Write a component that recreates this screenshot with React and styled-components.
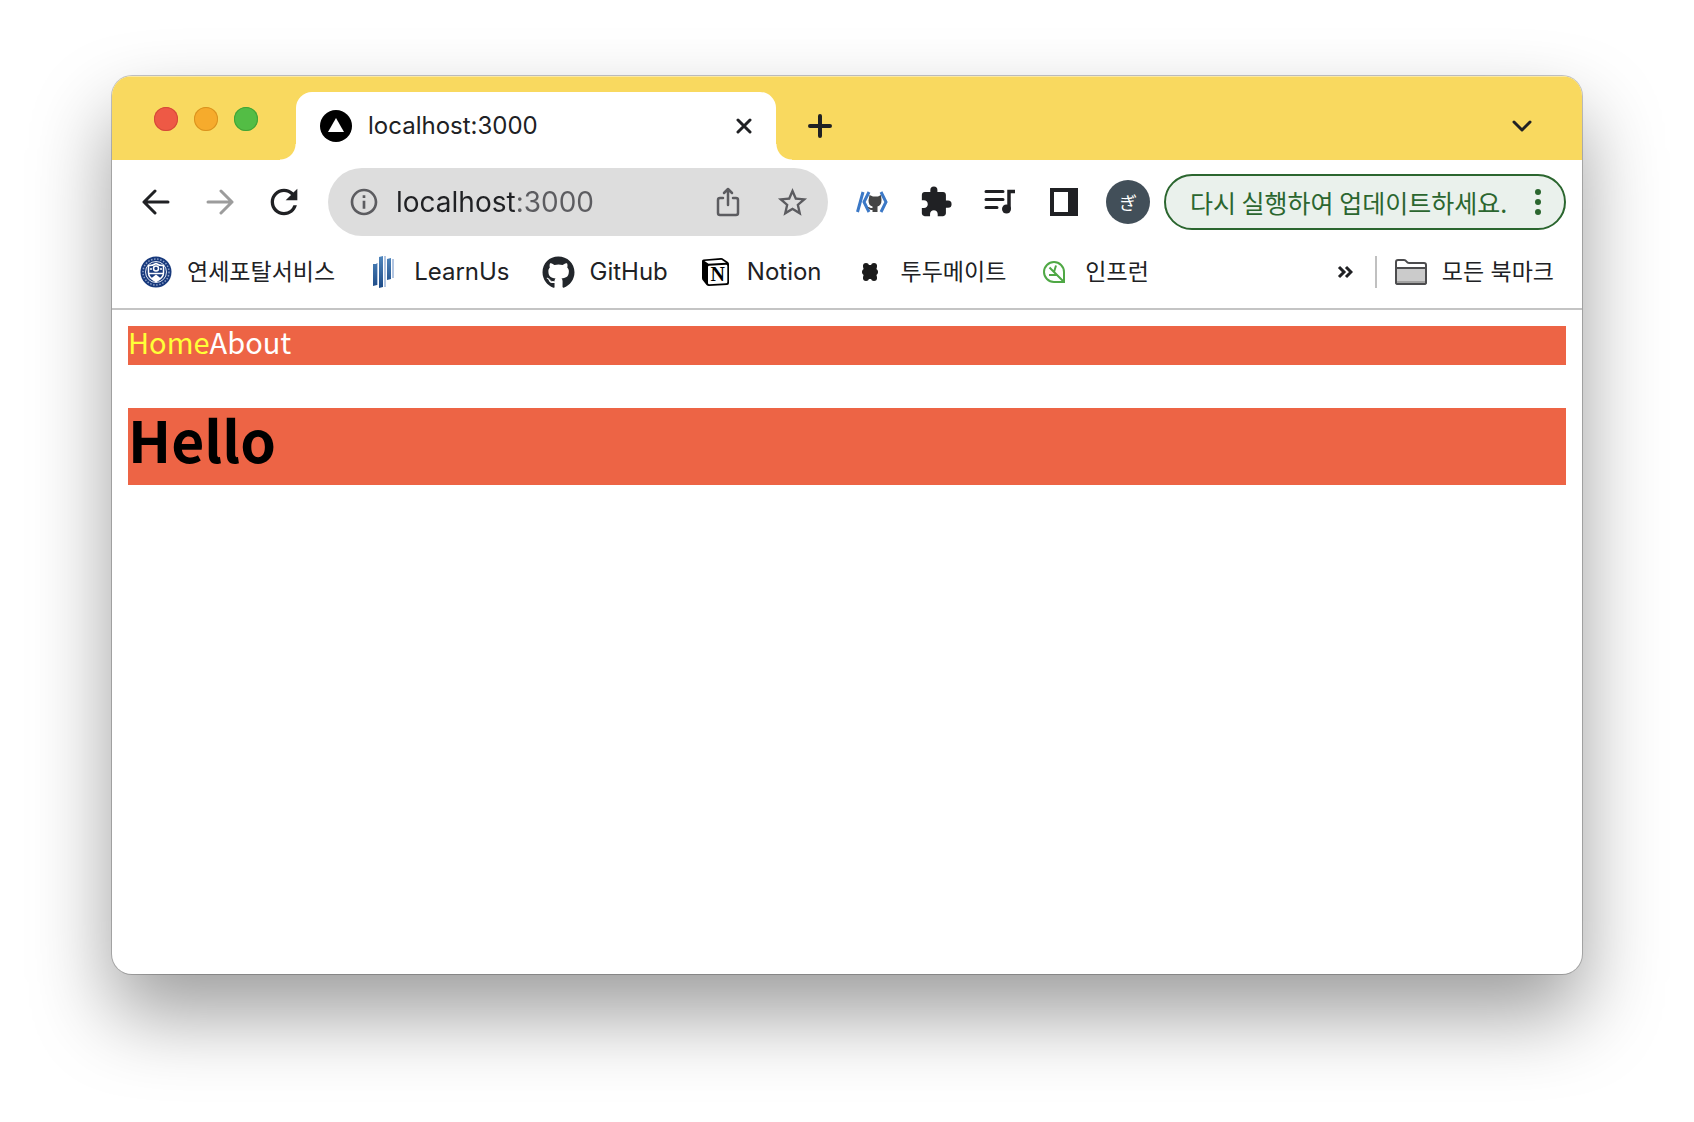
import React from "react";
import styled, { createGlobalStyle } from "styled-components";
import { MdExtension, MdRefresh, MdStarBorder, MdInfoOutline } from "react-icons/md";
import { FaGithub } from "react-icons/fa";

const uiFont = 'Inter, "Noto Sans CJK KR", sans-serif';
const ink = "#202124";
const muted = "#5c5c60";

const GlobalStyle = createGlobalStyle`
  *, *::before, *::after { box-sizing: border-box; }
  body { margin: 0; background: #fff; }
  button { border: 0; padding: 0; background: none; color: inherit; font: inherit; cursor: pointer; }
  a { text-decoration: none; }
  svg { display: block; flex: none; }
`;

const Desktop = styled.main`
  display: flex;
  min-height: 100vh;
  padding: 76px 112px 148px;
`;

const Window = styled.section`
  flex: 1;
  min-width: 0;
  display: flex;
  flex-direction: column;
  overflow: hidden;
  border-radius: 20px;
  background: #fff;
  color: ${ink};
  font-family: ${uiFont};
  box-shadow: 0 0 0 1px rgba(0, 0, 0, 0.22), 0 40px 80px rgba(0, 0, 0, 0.39);
`;

const TabStrip = styled.header`
  display: flex;
  align-items: flex-end;
  height: 84px;
  padding: 2px 24px 0 42px;
  background: #f9d95f;
  box-shadow: inset 0 2px 0 -1px #fbe9a5;
`;

const TrafficLights = styled.div`
  display: flex;
  align-self: center;
  gap: 16px;
  width: 142px;
`;

const Light = styled.button`
  width: 24px;
  height: 24px;
  border-radius: 50%;
  background: ${(p) => p.$fill};
  box-shadow: inset 0 0 0 1px ${(p) => p.$edge};
`;

const Tab = styled.div`
  position: relative;
  display: flex;
  align-items: center;
  gap: 16px;
  width: 480px;
  height: 68px;
  padding: 0 16px 0 24px;
  border-radius: 16px 16px 0 0;
  background: #fff;

  &::before,
  &::after {
    content: "";
    position: absolute;
    bottom: 0;
    width: 16px;
    height: 16px;
  }
  &::before {
    right: 100%;
    background: radial-gradient(circle at 0 0, transparent 15px, #fff 16px);
  }
  &::after {
    left: 100%;
    background: radial-gradient(circle at 100% 0, transparent 15px, #fff 16px);
  }
`;

const TabTitle = styled.span`
  flex: 1;
  font-size: 24px;
  line-height: 32px;
`;

const IconButton = styled.button`
  display: flex;
  align-items: center;
  justify-content: center;
  flex: none;
  width: ${(p) => p.$width || 56}px;
  height: 56px;
  color: ${(p) => p.$color || ink};
`;

const CloseButton = styled(IconButton)`
  width: 32px;
  height: 32px;
`;

const StripButton = styled(IconButton)`
  height: 68px;
  margin-left: ${(p) => (p.$end ? "auto" : "16px")};
  width: ${(p) => (p.$end ? 72 : 56)}px;
`;

const Toolbar = styled.div`
  display: flex;
  align-items: center;
  height: 84px;
  padding: 0 16px;
`;

const ButtonRow = styled.div`
  display: flex;
  gap: 8px;
`;

const AddressBar = styled.div`
  flex: 1;
  min-width: 0;
  display: flex;
  align-items: center;
  gap: 8px;
  height: 68px;
  margin: 0 16px;
  padding: 0 8px 0 12px;
  border-radius: 34px;
  background: #dddddd;
`;

const AddressInput = styled.input`
  flex: 1;
  min-width: 0;
  height: 56px;
  padding: 0;
  border: 0;
  outline: 0;
  font: 28px/36px ${uiFont};
  color: ${ink};
  background: linear-gradient(90deg, ${ink} 119px, ${muted} 119px);
  -webkit-background-clip: text;
  background-clip: text;
  -webkit-text-fill-color: transparent;
`;

const Avatar = styled.button`
  width: 44px;
  height: 44px;
  margin: 0 14px;
  border-radius: 50%;
  background: #424f59;
  color: #fff;
  font: 18px/44px "Noto Sans CJK JP", sans-serif;
`;

const UpdateButton = styled.button`
  display: flex;
  align-items: center;
  justify-content: space-between;
  flex: none;
  width: 402px;
  height: 56px;
  padding: 0 23px 0 24px;
  border: 2px solid #2b662f;
  border-radius: 28px;
  background: #eaf1ec;
  color: #2b662f;
  font-family: "Noto Sans CJK KR", sans-serif;
  font-size: 25px;
  line-height: 32px;
  white-space: nowrap;
`;

const BookmarkBar = styled.nav`
  display: flex;
  align-items: center;
  gap: 32px;
  height: 66px;
  padding: 0 28px 8px;
  border-bottom: 2px solid #c4c4c4;
`;

const Bookmark = styled.a`
  display: flex;
  align-items: center;
  gap: 15px;
  color: ${ink};
  font-size: 24px;
  line-height: 32px;
  white-space: nowrap;

  &:lang(ko) {
    font-size: 23px;
  }
`;

const BookmarkEnd = styled.div`
  display: flex;
  align-items: center;
  gap: 18px;
  margin-left: auto;
`;

const Divider = styled.span`
  width: 2px;
  height: 32px;
  background: #c0c0c0;
`;

const Page = styled.div`
  flex: 1;
  padding: 16px;
  font-family: "Noto Sans CJK KR", sans-serif;
`;

const SiteNav = styled.nav`
  display: flex;
  padding-bottom: 8px;
  background: #ed6445;
  font-size: 29px;
  line-height: 31px;
`;

const SiteLink = styled.a`
  color: ${(p) => (p.$active ? "#ffff38" : "#fff")};
`;

const Heading = styled.h1`
  margin: 43px 0 0;
  padding-bottom: 16px;
  background: #ed6445;
  color: #000;
  font-size: 57px;
  font-weight: 700;
  line-height: 61px;
`;

const Stroke = ({ size, width = 3, children, ...rest }) => (
  <svg width={size} height={size} viewBox={`0 0 ${size} ${size}`} fill="none" stroke="currentColor"
    strokeWidth={width} strokeLinecap="round" strokeLinejoin="round" aria-hidden="true" {...rest}>
    {children}
  </svg>
);

const Favicon = () => (
  <svg width="32" height="32" viewBox="0 0 32 32" aria-hidden="true">
    <circle cx="16" cy="16" r="16" fill="#000" />
    <path d="M16 8l8 14H8z" fill="#fff" />
  </svg>
);

const RepoExtensionIcon = () => (
  <svg width="32" height="24" viewBox="0 0 32 24" aria-hidden="true">
    <path d="M7 2L1.500 22M13 2L8 12l5 10M25 2l5 10-5 10" fill="none" stroke="#3b78c6" strokeWidth="3" />
    <path d="M13.500 5l3.500 1.500h5L25 5l.5 5c0 4-1.500 6-4 6.500V22h-5v-2c-3 .5-3.500-1.500-5-3 2-.5 2.500 1.500 5 1v-1.500c-2.500-.5-4-2.500-4-6z" fill="#454545" />
  </svg>
);

const QueueMusicIcon = () => (
  <Stroke size={34}>
    <path d="M3 6.500h17M3 14.500h17M3 22.500h11" />
    <path d="M32 6.500h-6V24" strokeWidth="3.500" strokeLinecap="butt" strokeLinejoin="miter" />
    <circle cx="23.500" cy="24" r="4.500" fill="currentColor" stroke="none" />
  </Stroke>
);

const SidePanelIcon = () => (
  <svg width="28" height="28" viewBox="0 0 28 28" fill="currentColor" fillRule="evenodd" aria-hidden="true">
    <path d="M0 0h28v28H0zM4 4v20h14V4z" />
  </svg>
);

const DotsIcon = () => (
  <svg width="6" height="28" viewBox="0 0 6 28" fill="currentColor" aria-hidden="true">
    <circle cx="3" cy="4" r="3" /><circle cx="3" cy="14" r="3" /><circle cx="3" cy="24" r="3" />
  </svg>
);

const CrestIcon = () => (
  <svg width="32" height="32" viewBox="0 0 32 32" fill="none" aria-hidden="true">
    <circle cx="16" cy="16" r="15.500" fill="#17397c" />
    <circle cx="16" cy="16" r="13" stroke="#8fa2c8" strokeWidth="1.500" strokeDasharray="1.500 1.600" />
    <circle cx="16" cy="16" r="10.500" fill="#17397c" stroke="#dfe5f1" />
    <path d="M8.500 9.500c3 .5 5-.5 7.500-2 2.500 1.500 4.500 2.500 7.500 2V17c0 4-3.500 6.500-7.500 8.500-4-2-7.500-4.500-7.500-8.500z" fill="#17397c" stroke="#fff" strokeWidth="1.500" />
    <circle cx="16" cy="12.500" r="2.500" stroke="#fff" strokeWidth="1.500" />
    <path d="M10 13h2M20 13h2M9 17.500h14" stroke="#fff" strokeWidth="1.600" />
    <path d="M16 18.500l5 4-5 3-5-3z" fill="#fff" />
  </svg>
);

const LearnUsIcon = () => (
  <svg width="32" height="32" viewBox="0 0 32 32" aria-hidden="true">
    <defs>
      <linearGradient id="bars" x1="0" y1="0" x2="0" y2="1">
        <stop offset="0" stopColor="#4f86bd" />
        <stop offset="1" stopColor="#1d4a86" />
      </linearGradient>
    </defs>
    <path d="M9 7h2v22H9zM17 0h2v31h-2zM25 3h2v19h-2z" fill="#b3c6e2" />
    <path d="M6 8h4v21l-4 1zM12 1l4-1v31l-4 1zM20 3l4-1v21l-4 1z" fill="url(#bars)" />
  </svg>
);

const NotionIcon = () => (
  <svg width="32" height="32" viewBox="0 0 32 32" aria-hidden="true">
    <path d="M2 5q0-1.500 1.500-1.500L21 2q1.500 0 2.500 1l4.500 3q1 1 1 2v19q0 2-2 2L9 30q-1.500 0-2.500-1L3 24.500Q2 23.500 2 22z" fill="#000" />
    <path d="M4.500 5L21.500 3.700 26 6.700 8.500 7.800z" fill="#fff" />
    <path d="M8 11q0-1.200 1.200-1.300L26 8.700q1.300 0 1.300 1.200v16q0 1.300-1.300 1.400L9.300 28.200Q8 28.200 8 27z" fill="#fff" />
    <text x="17.700" y="25" textAnchor="middle" fontFamily="'Liberation Serif', serif" fontWeight="700" fontSize="20" fill="#000">N</text>
  </svg>
);

const CloverIcon = () => (
  <svg width="32" height="32" viewBox="0 0 32 32" fill="#1b1b1b" aria-hidden="true">
    <rect x="9.500" y="9" width="13" height="14" />
    <circle cx="12" cy="10" r="3" /><circle cx="20" cy="10" r="3" />
    <circle cx="11" cy="16" r="3" /><circle cx="21" cy="16" r="3" />
    <circle cx="12" cy="22" r="3" /><circle cx="20" cy="22" r="3" />
  </svg>
);

const LeafIcon = () => (
  <svg width="32" height="32" viewBox="0 0 32 32" fill="none" stroke="#4fa845" strokeWidth="2" aria-hidden="true">
    <path d="M26 26H16A10 10 0 1 1 26 16zM26 26L11.500 11.500M16 16l2-6.500M18 19h-7" />
  </svg>
);

const FolderIcon = () => (
  <svg width="32" height="26" viewBox="0 0 32 26" fill="#fff" stroke="#4c4c4e" strokeWidth="2" aria-hidden="true">
    <path d="M1 23V3q0-2 2-2h6q1.500 0 2.500 1.500T14 4h15q2 0 2 2v17q0 2-2 2H3q-2 0-2-2z" />
    <path d="M1 9h30v14q0 2-2 2H3q-2 0-2-2z" fill="#cbcbcb" />
    <path d="M2 23h28" stroke="#a2a2a2" />
  </svg>
);

const lights = [
  ["닫기", "#ee5945", "#d44a38"],
  ["최소화", "#f6ab2c", "#d9931f"],
  ["확대", "#53bd45", "#43a336"],
];

const bookmarks = [
  ["연세포탈서비스", "ko", <CrestIcon />],
  ["LearnUs", "en", <LearnUsIcon />],
  ["GitHub", "en", <FaGithub size={33} color="#22262b" />],
  ["Notion", "en", <NotionIcon />],
  ["투두메이트", "ko", <CloverIcon />],
  ["인프런", "ko", <LeafIcon />],
];

export default function App() {
  return (
    <Desktop>
      <GlobalStyle />
      <Window>
        <TabStrip>
          <TrafficLights>
            {lights.map(([name, fill, edge]) => (
              <Light key={name} type="button" aria-label={name} $fill={fill} $edge={edge} />
            ))}
          </TrafficLights>
          <Tab>
            <Favicon />
            <TabTitle>localhost:3000</TabTitle>
            <CloseButton type="button" aria-label="탭 닫기">
              <Stroke size={16}><path d="M2 2l12 12M14 2L2 14" /></Stroke>
            </CloseButton>
          </Tab>
          <StripButton type="button" aria-label="새 탭">
            <Stroke size={24} width={4}><path d="M12 2v20M2 12h20" /></Stroke>
          </StripButton>
          <StripButton type="button" aria-label="탭 검색" $end>
            <Stroke size={20}><path d="M2 6l8 8 8-8" /></Stroke>
          </StripButton>
        </TabStrip>

        <Toolbar>
          <ButtonRow>
            <IconButton type="button" aria-label="뒤로">
              <Stroke size={28}><path d="M26 14H2M13 3L2 14l11 11" /></Stroke>
            </IconButton>
            <IconButton type="button" aria-label="앞으로" $color="#9c9c9c">
              <Stroke size={28}><path d="M2 14h24M15 3l11 11-11 11" /></Stroke>
            </IconButton>
            <IconButton type="button" aria-label="새로고침">
              <MdRefresh size={40} />
            </IconButton>
          </ButtonRow>
          <AddressBar>
            <IconButton type="button" aria-label="사이트 정보" $width={48} $color={muted}>
              <MdInfoOutline size={32} />
            </IconButton>
            <AddressInput aria-label="주소" defaultValue="localhost:3000" spellCheck={false} />
            <IconButton type="button" aria-label="공유" $color={muted}>
              <Stroke size={32} width={2}>
                <path d="M11 12H8q-2 0-2 2v13q0 2 2 2h16q2 0 2-2V14q0-2-2-2h-3M16 19V3M12 7l4-4 4 4" strokeWidth="2.500" />
              </Stroke>
            </IconButton>
            <IconButton type="button" aria-label="북마크에 추가" $color={muted}>
              <MdStarBorder size={35} />
            </IconButton>
          </AddressBar>
          <ButtonRow>
            <IconButton type="button" aria-label="GitHub 확장 프로그램"><RepoExtensionIcon /></IconButton>
            <IconButton type="button" aria-label="확장 프로그램"><MdExtension size={34} /></IconButton>
            <IconButton type="button" aria-label="미디어 제어"><QueueMusicIcon /></IconButton>
            <IconButton type="button" aria-label="사이드 패널"><SidePanelIcon /></IconButton>
          </ButtonRow>
          <Avatar type="button">ぎ</Avatar>
          <UpdateButton type="button">
            다시 실행하여 업데이트하세요.
            <DotsIcon />
          </UpdateButton>
        </Toolbar>

        <BookmarkBar aria-label="북마크">
          {bookmarks.map(([name, lang, icon]) => (
            <Bookmark key={name} href="#" lang={lang}>{icon}{name}</Bookmark>
          ))}
          <BookmarkEnd>
            <IconButton type="button" aria-label="북마크 더보기" $width={24}>
              <Stroke size={16} width={3} strokeLinecap="butt" strokeLinejoin="miter">
                <path d="M2 3l5 5-5 5M9 3l5 5-5 5" />
              </Stroke>
            </IconButton>
            <Divider />
            <Bookmark href="#" lang="ko"><FolderIcon />모든 북마크</Bookmark>
          </BookmarkEnd>
        </BookmarkBar>

        <Page>
          <SiteNav>
            <SiteLink href="#" $active>Home</SiteLink>
            <SiteLink href="#">About</SiteLink>
          </SiteNav>
          <Heading>Hello</Heading>
        </Page>
      </Window>
    </Desktop>
  );
}
